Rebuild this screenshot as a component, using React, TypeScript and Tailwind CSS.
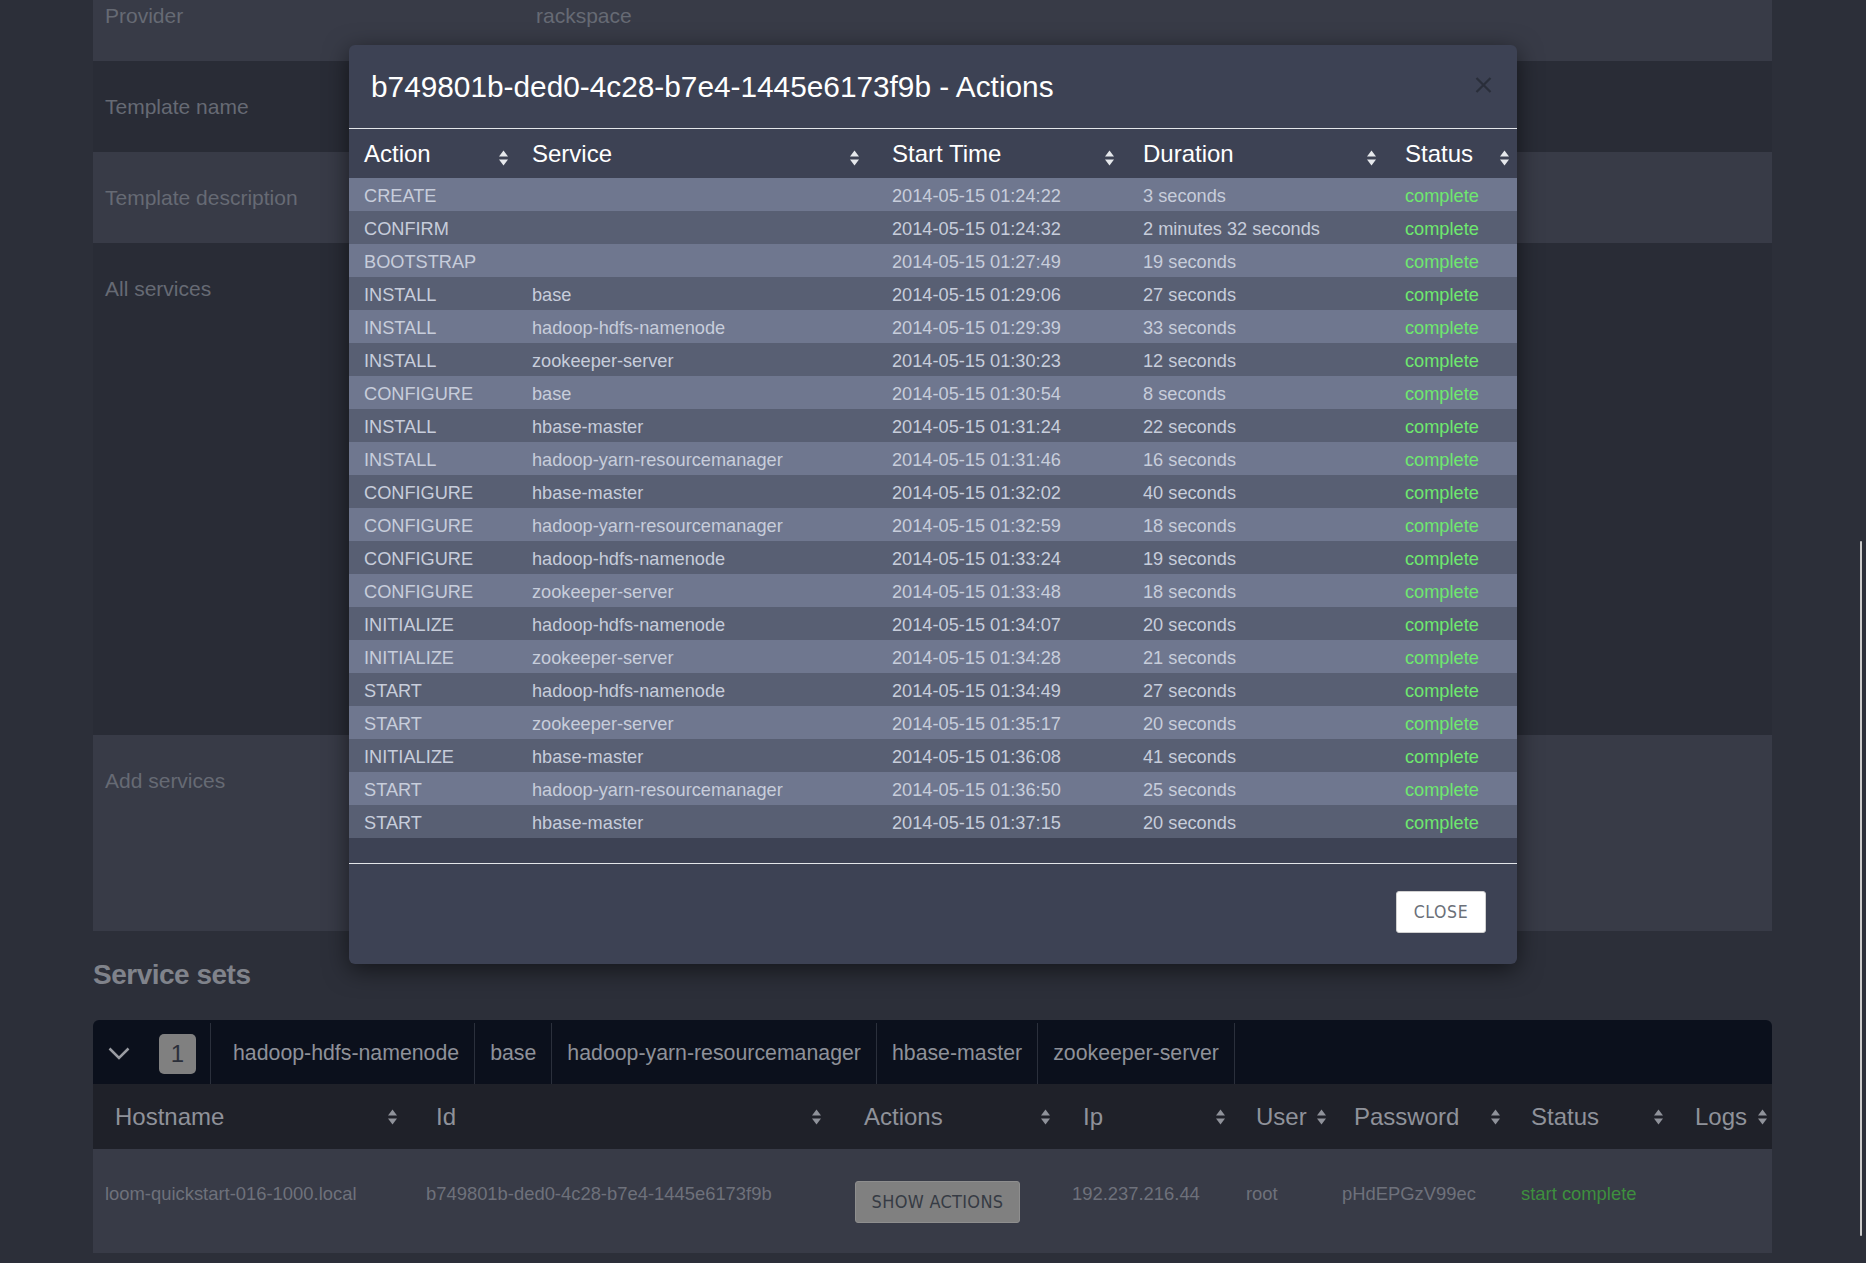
import React from 'react';

const actions: [string, string, string, string][] = [
  ['CREATE', '', '2014-05-15 01:24:22', '3 seconds'],
  ['CONFIRM', '', '2014-05-15 01:24:32', '2 minutes 32 seconds'],
  ['BOOTSTRAP', '', '2014-05-15 01:27:49', '19 seconds'],
  ['INSTALL', 'base', '2014-05-15 01:29:06', '27 seconds'],
  ['INSTALL', 'hadoop-hdfs-namenode', '2014-05-15 01:29:39', '33 seconds'],
  ['INSTALL', 'zookeeper-server', '2014-05-15 01:30:23', '12 seconds'],
  ['CONFIGURE', 'base', '2014-05-15 01:30:54', '8 seconds'],
  ['INSTALL', 'hbase-master', '2014-05-15 01:31:24', '22 seconds'],
  ['INSTALL', 'hadoop-yarn-resourcemanager', '2014-05-15 01:31:46', '16 seconds'],
  ['CONFIGURE', 'hbase-master', '2014-05-15 01:32:02', '40 seconds'],
  ['CONFIGURE', 'hadoop-yarn-resourcemanager', '2014-05-15 01:32:59', '18 seconds'],
  ['CONFIGURE', 'hadoop-hdfs-namenode', '2014-05-15 01:33:24', '19 seconds'],
  ['CONFIGURE', 'zookeeper-server', '2014-05-15 01:33:48', '18 seconds'],
  ['INITIALIZE', 'hadoop-hdfs-namenode', '2014-05-15 01:34:07', '20 seconds'],
  ['INITIALIZE', 'zookeeper-server', '2014-05-15 01:34:28', '21 seconds'],
  ['START', 'hadoop-hdfs-namenode', '2014-05-15 01:34:49', '27 seconds'],
  ['START', 'zookeeper-server', '2014-05-15 01:35:17', '20 seconds'],
  ['INITIALIZE', 'hbase-master', '2014-05-15 01:36:08', '41 seconds'],
  ['START', 'hadoop-yarn-resourcemanager', '2014-05-15 01:36:50', '25 seconds'],
  ['START', 'hbase-master', '2014-05-15 01:37:15', '20 seconds'],
];

// modal table header: label + right padding that puts the sort arrows where they sit
const modalCols = [
  { label: 'Action', pr: 'pr-[8px]' },
  { label: 'Service', pr: 'pr-[17px]' },
  { label: 'Start Time', pr: 'pr-[13px]' },
  { label: 'Duration', pr: 'pr-[13px]' },
  { label: 'Status', pr: 'pr-[7px]' },
];

const hostCols = [
  { label: 'Hostname', pr: 'pr-[16px]' },
  { label: 'Id', pr: 'pr-[20px]' },
  { label: 'Actions', pr: 'pr-[10px]' },
  { label: 'Ip', pr: 'pr-[8px]' },
  { label: 'User', pr: 'pr-[5px]' },
  { label: 'Password', pr: 'pr-[8px]' },
  { label: 'Status', pr: 'pr-[9px]' },
  { label: 'Logs', pr: 'pr-[4px]' },
];

const services = ['hadoop-hdfs-namenode', 'base', 'hadoop-yarn-resourcemanager', 'hbase-master', 'zookeeper-server'];

function SortIcon({ className }: { className?: string }) {
  return (
    <svg width="11" height="18" viewBox="0 0 11 18" fill="currentColor" className={className}>
      <path d="M5.5 1.5 10 7.5H1z" />
      <path d="M1 10.5h9l-4.5 6z" />
    </svg>
  );
}

function InfoRow({ label, value, h, light }: { label: string; value?: string; h: string; light?: boolean }) {
  return (
    <div className={`flex ${h} ${light ? 'bg-[#383b47]' : 'bg-[#292c36]'}`}>
      <div className="w-[443px] pl-[12px] pt-[34px] text-[21px] leading-[24px] text-[#666a74]">{label}</div>
      {value && <div className="pt-[34px] text-[21px] leading-[24px] text-[#666a74]">{value}</div>}
    </div>
  );
}

export default function App() {
  return (
    <div className="relative h-[1263px] w-full overflow-hidden bg-[#2c2f39] font-['Liberation_Sans',Arial,sans-serif]">
      <div className="ml-[93px] w-[1679px]">
        <div className="-mt-[30px]">
          <InfoRow label="Provider" value="rackspace" h="h-[91px]" light />
        </div>
        <InfoRow label="Template name" h="h-[91px]" />
        <InfoRow label="Template description" h="h-[91px]" light />
        <InfoRow label="All services" h="h-[492px]" />
        <InfoRow label="Add services" h="h-[196px]" light />

        <h2 className="mt-[28px] mb-[29px] text-[28px] leading-[32px] font-bold tracking-[-0.5px] text-[#80838b]">Service sets</h2>

        {/* service set bar */}
        <div className="flex h-[64px] items-stretch rounded-t-[6px] bg-[#0b101c] pt-[3px]">
          <div className="flex w-[118px] items-center border-r border-[#2b303c] pl-[15px]">
            <svg width="22" height="13" viewBox="0 0 22 13" fill="none" stroke="#9a9ca2" strokeWidth="2.5">
              <path d="M1.5 1.5 11 11 20.5 1.5" />
            </svg>
            <div className="ml-[29px] flex h-[40px] w-[37px] items-center justify-center rounded-[5px] bg-[#808080] text-[24px] text-[#2b2f3a]">
              1
            </div>
          </div>
          {services.map((s, i) => (
            <div
              key={s}
              className={`flex items-center border-r border-[#2b303c] pr-[15px] text-[21.3px] text-[#8e9199] ${i === 0 ? 'pl-[22px]' : 'pl-[15px]'}`}
            >
              {s}
            </div>
          ))}
        </div>

        {/* hosts table */}
        <div className="grid h-[65px] grid-cols-[321px_428px_219px_173px_98px_177px_164px_99px] bg-[#1f2129]">
          {hostCols.map((c) => (
            <div key={c.label} className={`flex items-center justify-between pl-[22px] ${c.pr} text-[24px] text-[#8f929a]`}>
              <span>{c.label}</span>
              <SortIcon className="text-[#8f929a]" />
            </div>
          ))}
        </div>
        <div className="grid h-[104px] grid-cols-[321px_428px_219px_173px_98px_177px_164px_99px] bg-[#383b47] text-[18.4px] leading-[22px] text-[#6e717b]">
          <div className="pl-[12px] pt-[34px]">loom-quickstart-016-1000.local</div>
          <div className="pl-[12px] pt-[34px]">b749801b-ded0-4c28-b7e4-1445e6173f9b</div>
          <div className="pl-[13px] pt-[32px]">
            <button className="h-[42px] w-[165px] rounded-[3px] border border-[#8e8e8e] bg-[#808080] font-['Liberation_Sans_Narrow','DejaVu_Sans_Condensed',sans-serif] text-[18px] tracking-[0.3px] text-[#363b44]">
              SHOW ACTIONS
            </button>
          </div>
          <div className="pl-[11px] pt-[34px]">192.237.216.44</div>
          <div className="pl-[12px] pt-[34px]">root</div>
          <div className="pl-[10px] pt-[34px]">pHdEPGzV99ec</div>
          <div className="pl-[12px] pt-[34px] text-[#3e8f3e]">start complete</div>
          <div />
        </div>
      </div>

      {/* scrollbar */}
      <div className="absolute top-[541px] right-[4px] h-[695px] w-[2px] rounded-full bg-[#c9c9c9]" />

      {/* actions modal */}
      <div className="absolute top-[45px] left-[349px] w-[1168px] overflow-hidden rounded-[6px] bg-[#3d4254] shadow-[0_6px_24px_rgba(0,0,0,0.55)]">
        <div className="flex h-[83px] items-center justify-between pr-[25px] pl-[22px]">
          <h1 className="text-[29.8px] leading-none text-white">b749801b-ded0-4c28-b7e4-1445e6173f9b - Actions</h1>
          <svg width="17" height="16" viewBox="0 0 17 16" fill="none" stroke="#2a2e3a" strokeWidth="2.2" className="mb-[4px]">
            <path d="M1.5 1 15.5 15M15.5 1 1.5 15" />
          </svg>
        </div>
        <div className="h-px bg-[#e4e6ea]" />
        <div className="grid h-[49px] grid-cols-[168px_360px_251px_262px_127px]">
          {modalCols.map((c) => (
            <div key={c.label} className={`flex items-center justify-between pl-[15px] ${c.pr} text-[24px] text-white`}>
              <span>{c.label}</span>
              <SortIcon className="mt-[8px] text-[#e6e8ec]" />
            </div>
          ))}
        </div>
        {actions.map(([action, service, start, duration], i) => (
          <div
            key={i}
            className={`grid h-[33px] grid-cols-[168px_360px_251px_262px_127px] pt-[7px] text-[18.2px] leading-[22px] text-[#c7cddb] ${i % 2 === 0 ? 'bg-[#6f778f]' : 'bg-[#585f73]'}`}
          >
            <div className="pl-[15px]">{action}</div>
            <div className="pl-[15px]">{service}</div>
            <div className="pl-[15px]">{start}</div>
            <div className="pl-[15px]">{duration}</div>
            <div className="pl-[15px] text-[#6ee86e]">complete</div>
          </div>
        ))}
        <div className="h-[25px]" />
        <div className="h-px bg-[#e4e6ea]" />
        <div className="flex h-[100px] justify-end pt-[27px] pr-[31px]">
          <button className="h-[42px] w-[90px] rounded-[3px] border border-[#d0d0d0] bg-white font-['Liberation_Sans_Narrow','DejaVu_Sans_Condensed',sans-serif] text-[17.5px] tracking-[0.6px] text-[#6b7079]">
            CLOSE
          </button>
        </div>
      </div>
    </div>
  );
}
